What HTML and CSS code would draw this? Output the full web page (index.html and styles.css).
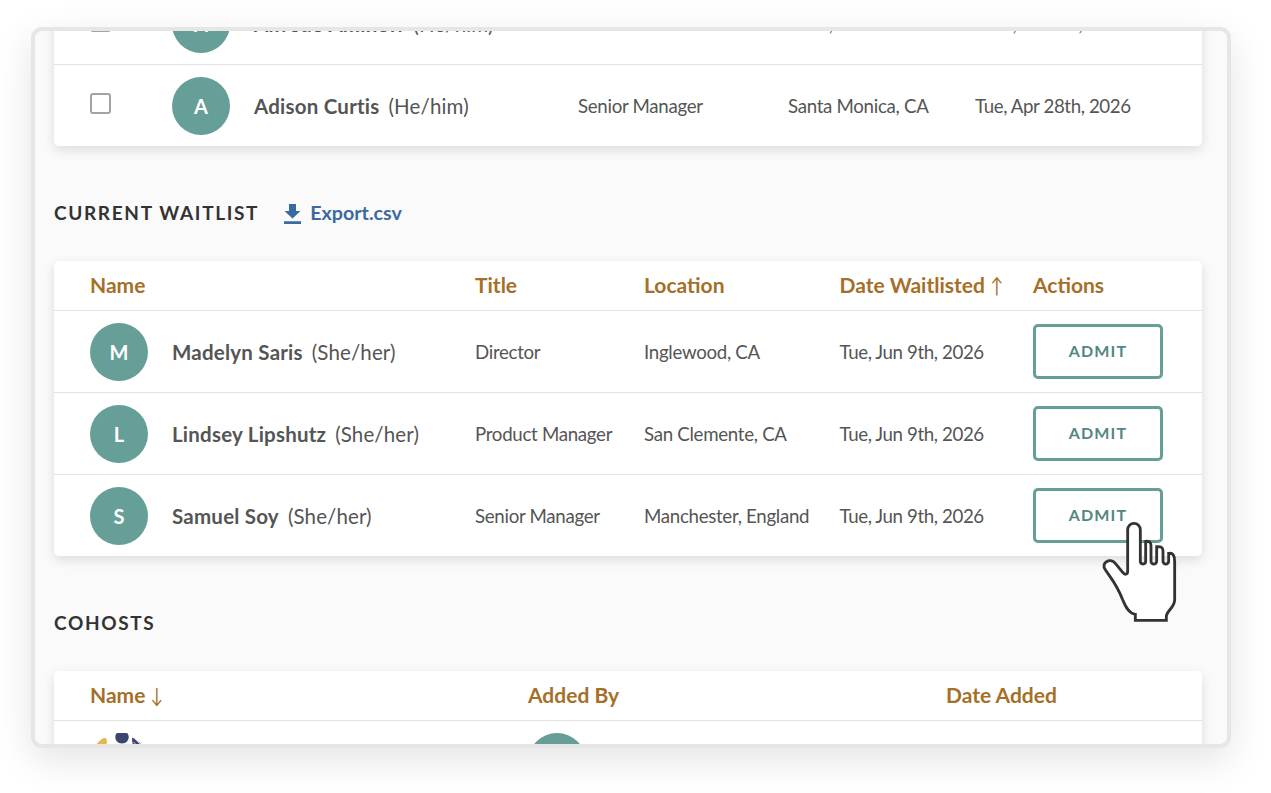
FILE: index.html
```html
<!DOCTYPE html>
<html lang="en">
<head>
<meta charset="utf-8">
<title>Waitlist</title>
<link rel="stylesheet" href="styles.css">
</head>
<body>
<main class="frame">
  <div class="content">
    <section class="card attendees">
      <div class="row">
        <span class="checkbox"></span>
        <div class="person"><span class="avatar">A</span><b class="name">Alfredo Aminoff</b><span class="pronoun">(He/him)</span></div>
        <span class="cell">Director</span><span class="cell">Reno, NV</span><span class="cell date">Wed, Jun 3rd, 2026</span>
      </div>
      <div class="row">
        <span class="checkbox"></span>
        <div class="person"><span class="avatar">A</span><b class="name">Adison Curtis</b><span class="pronoun">(He/him)</span></div>
        <span class="cell">Senior Manager</span><span class="cell">Santa Monica, CA</span><span class="cell date">Tue, Apr 28th, 2026</span>
      </div>
    </section>

    <header class="section-head">
      <h2>CURRENT WAITLIST</h2>
      <a class="export">
        <svg width="17" height="20" viewBox="0 0 17 20"><path d="M5 0h7v7h4.500L8.500 14.500.5 7H5zM0 17.300h17V20H0z"/></svg>
        <span>Export.csv</span>
      </a>
    </header>

    <section class="card waitlist">
      <div class="row head"><span>Name</span><span>Title</span><span>Location</span><span>Date Waitlisted <i class="arrow">↑</i></span><span>Actions</span></div>
      <div class="row">
        <div class="person"><span class="avatar">M</span><b class="name">Madelyn Saris</b><span class="pronoun">(She/her)</span></div>
        <span class="cell">Director</span><span class="cell">Inglewood, CA</span><span class="cell date">Tue, Jun 9th, 2026</span>
        <button class="admit">ADMIT</button>
      </div>
      <div class="row">
        <div class="person"><span class="avatar">L</span><b class="name">Lindsey Lipshutz</b><span class="pronoun">(She/her)</span></div>
        <span class="cell">Product Manager</span><span class="cell">San Clemente, CA</span><span class="cell date">Tue, Jun 9th, 2026</span>
        <button class="admit">ADMIT</button>
      </div>
      <div class="row">
        <div class="person"><span class="avatar">S</span><b class="name">Samuel Soy</b><span class="pronoun">(She/her)</span></div>
        <span class="cell">Senior Manager</span><span class="cell">Manchester, England</span><span class="cell date">Tue, Jun 9th, 2026</span>
        <button class="admit">ADMIT</button>
      </div>
    </section>

    <header class="section-head"><h2>COHOSTS</h2></header>

    <section class="card cohosts">
      <div class="row head"><span>Name <i class="arrow">↓</i></span><span>Added By</span><span>Date Added</span></div>
      <div class="row">
        <svg class="logo" width="58" height="58" viewBox="0 0 58 58">
          <path fill="#e5b84c" d="M5 13C8 9 11 6 14 5c3-.3 3.500 2.500 2.500 6L12 20H2z"/>
          <path fill="#3b456f" d="M26.500 .3C29-.5 35-.5 37.500 .3c1.800 2.500 1.500 5.700-.3 8-2.300 3-8 3-10.400 0C25 6 24.700 2.800 26.500 .3z"/>
          <path fill="#3b456f" d="M42 4.500c3 1 7 4.500 10 7.500l3 6H46c-3-3-4-9-4-13.500z"/>
          <path stroke="#fff" stroke-width=".7" d="M45 6l8 8M43.500 9l6 6"/>
        </svg>
        <span class="avatar">A</span>
      </div>
    </section>
  </div>
</main>
<svg class="pointer" width="100" height="120" viewBox="0 0 300 360">
  <path d="M113 59a19 19 0 0 1 38 0V154a8 8 0 0 0 16 0V94C178 93 183 97 183 107V154a8.500 8.500 0 0 0 17 0V110C214 109 219 113 219 123V154a8.500 8.500 0 0 0 17 0V130C249 128 254 136 254 155V270C254 292 229 304 229 319V331H136V313C117 311 107 291 98 269 80 222 63 205 46 179 31 160 60 141 76 160L98 187C104 196 113 194 113 184Z"/>
</svg>
</body>
</html>
```
FILE: styles.css
```css
* { box-sizing: border-box; }
body {
  margin: 0;
  padding: 27px 0 0 31px;
  height: 793px;
  overflow: hidden;
  background: #fff;
  color: #555;
  font-family: Lato, sans-serif;
}
.frame {
  width: 1200px;
  height: 721px;
  border: 4px solid #e6e6e6;
  border-radius: 11px;
  background: #fafafa;
  overflow: hidden;
  box-shadow: 0 12px 38px rgba(0, 0, 0, .11);
}
.content { margin: -48px 0 0 19px; width: 1148.400px; }
.card {
  background: #fff;
  border-radius: 5px;
  box-shadow: 0 4px 12px rgba(0, 0, 0, .12);
}
.row {
  display: grid;
  align-items: center;
  height: 82px;
  padding-left: 36px;
  border-bottom: 1px solid #e3e3e3;
}
.row:last-child { height: 81px; border-bottom: 0; }
.attendees .row { grid-template-columns: 82px 406px 210px 187px 1fr; }
.waitlist .row { grid-template-columns: 385px 169px 195.500px 193.500px 1fr; }
.cohosts .row { grid-template-columns: 438px 418px 1fr; }
.row.head {
  height: 50px;
  padding-bottom: 2px;
  color: #a66f28;
  font-size: 21px;
  font-weight: 700;
  line-height: 25px;
  white-space: nowrap;
}
.arrow {
  display: inline-block;
  margin-left: -1px;
  font-size: 21px;
  font-style: normal;
  font-weight: 400;
  line-height: 1;
  transform: scaleX(.8);
}
.person { display: flex; align-items: center; }
.avatar {
  display: flex;
  align-items: center;
  justify-content: center;
  width: 58px;
  height: 58px;
  border-radius: 50%;
  background: #669e98;
  color: #fff;
  font-size: 20px;
  font-weight: 700;
}
.name { margin-left: 24px; font-size: 20.500px; letter-spacing: .22px; }
.pronoun { margin-left: 9px; font-size: 20.500px; letter-spacing: .12px; }
.cell { font-size: 18.700px; letter-spacing: -.3px; white-space: nowrap; }
.date { letter-spacing: -.4px; }
.checkbox {
  width: 21px;
  height: 21px;
  margin-top: -5px;
  border: 2px solid #a3a3a3;
  border-radius: 3px;
}
.section-head {
  display: flex;
  align-items: center;
  gap: 25px;
  height: 115px;
}
.section-head h2 {
  margin: 18px 0 0;
  font-size: 19px;
  font-weight: 700;
  line-height: 24px;
  letter-spacing: 1.660px;
  color: #333;
}
.export {
  display: flex;
  align-items: center;
  gap: 9px;
  margin-top: 19px;
  color: #3a6ba0;
  font-size: 19.700px;
  font-weight: 700;
  line-height: 24px;
}
.export svg { fill: #3a6ba0; margin-top: 1px; }
.admit {
  width: 130px;
  height: 55px;
  padding: 0 0 2px;
  border: 3px solid #669e98;
  border-radius: 5px;
  background: #fff;
  color: #538782;
  font: 700 16px Lato, sans-serif;
  letter-spacing: 1.200px;
}
.cohosts .row + .row { align-items: start; padding-top: 12px; }
.pointer { position: absolute; left: 1090px; top: 510px; }
.pointer path {
  fill: #fff;
  stroke: #333;
  stroke-width: 8.500;
  stroke-linejoin: miter;
}
```
